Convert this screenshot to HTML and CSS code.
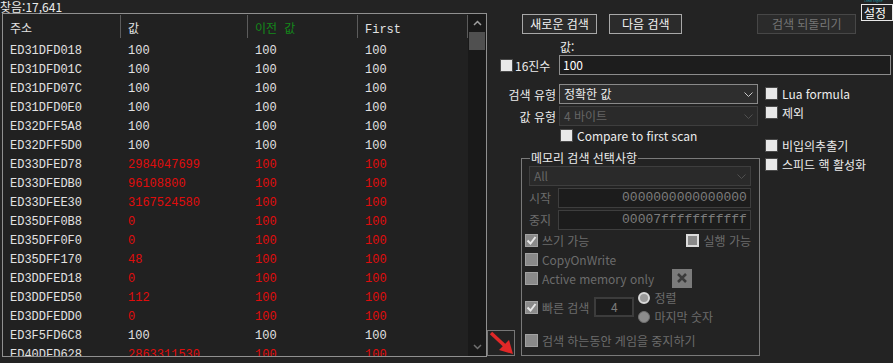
FILE: index.html
```html
<!DOCTYPE html>
<html lang="ko">
<head>
<meta charset="UTF-8">
<title>Cheat Engine</title>
<link rel="stylesheet" href="styles.css">
</head>
<body>
<div class="form">

    <!-- 결과 목록 -->
    <div class="left">
        <div class="found">찾음:17,641</div>
        <div class="results">
            <div class="grid">
                <div class="head">
                    <div class="cell c1">주소</div>
                    <div class="cell c2">값</div>
                    <div class="cell c3 prev">이전 값</div>
                    <div class="cell c4">First</div>
                </div>
                <div class="rows">
                    <div class="row"><div class="c1">ED31DFD018</div><div class="c2">100</div><div class="c3">100</div><div class="c4">100</div></div>
                    <div class="row"><div class="c1">ED31DFD01C</div><div class="c2">100</div><div class="c3">100</div><div class="c4">100</div></div>
                    <div class="row"><div class="c1">ED31DFD07C</div><div class="c2">100</div><div class="c3">100</div><div class="c4">100</div></div>
                    <div class="row"><div class="c1">ED31DFD0E0</div><div class="c2">100</div><div class="c3">100</div><div class="c4">100</div></div>
                    <div class="row"><div class="c1">ED32DFF5A8</div><div class="c2">100</div><div class="c3">100</div><div class="c4">100</div></div>
                    <div class="row"><div class="c1">ED32DFF5D0</div><div class="c2">100</div><div class="c3">100</div><div class="c4">100</div></div>
                    <div class="row changed"><div class="c1">ED33DFED78</div><div class="c2">2984047699</div><div class="c3">100</div><div class="c4">100</div></div>
                    <div class="row changed"><div class="c1">ED33DFEDB0</div><div class="c2">96108800</div><div class="c3">100</div><div class="c4">100</div></div>
                    <div class="row changed"><div class="c1">ED33DFEE30</div><div class="c2">3167524580</div><div class="c3">100</div><div class="c4">100</div></div>
                    <div class="row changed"><div class="c1">ED35DFF0B8</div><div class="c2">0</div><div class="c3">100</div><div class="c4">100</div></div>
                    <div class="row changed"><div class="c1">ED35DFF0F0</div><div class="c2">0</div><div class="c3">100</div><div class="c4">100</div></div>
                    <div class="row changed"><div class="c1">ED35DFF170</div><div class="c2">48</div><div class="c3">100</div><div class="c4">100</div></div>
                    <div class="row changed"><div class="c1">ED3DDFED18</div><div class="c2">0</div><div class="c3">100</div><div class="c4">100</div></div>
                    <div class="row changed"><div class="c1">ED3DDFED50</div><div class="c2">112</div><div class="c3">100</div><div class="c4">100</div></div>
                    <div class="row changed"><div class="c1">ED3DDFEDD0</div><div class="c2">0</div><div class="c3">100</div><div class="c4">100</div></div>
                    <div class="row"><div class="c1">ED3F5FD6C8</div><div class="c2">100</div><div class="c3">100</div><div class="c4">100</div></div>
                    <div class="row changed"><div class="c1">ED40DFD628</div><div class="c2">2863311530</div><div class="c3">100</div><div class="c4">100</div></div>
                </div>
            </div>
            <div class="scrollbar">
                <div class="sb-btn"><svg width="9" height="6" viewBox="0 0 9 6"><polyline points="1,5 4.5,1.5 8,5" fill="none" stroke="#a0a0a0" stroke-width="1.5"/></svg></div>
                <div class="sb-thumb"></div>
                <div class="sb-track"></div>
                <div class="sb-btn"><svg width="9" height="6" viewBox="0 0 9 6"><polyline points="1,1 4.5,4.5 8,1" fill="none" stroke="#707070" stroke-width="1.5"/></svg></div>
            </div>
        </div>
    </div>

    <!-- 검색 패널 -->
    <div class="panel">
        <div class="toprow">
            <div class="btn btn-new">새로운 검색</div>
            <div class="btn btn-next">다음 검색</div>
            <div class="btn btn-undo">검색 되돌리기</div>
            <div class="settings-wrap">
                <div class="logo">Cheat Engine</div>
                <div class="settings">설정</div>
            </div>
        </div>

        <div class="value-label">값:</div>
        <div class="value-row">
            <div class="hex"><span class="cb"></span>16진수</div>
            <div class="value-input">100</div>
        </div>

        <div class="scan">
            <div class="scan-main">
                <div class="field-row">
                    <div class="field-label">검색 유형</div>
                    <div class="select">정확한 값<svg width="9" height="5" viewBox="0 0 9 5"><polyline points="0.5,0.5 4.5,4.5 8.5,0.5" fill="none" stroke="#c8c8c8"/></svg></div>
                </div>
                <div class="field-row">
                    <div class="field-label">값 유형</div>
                    <div class="select disabled">4 바이트<svg width="9" height="5" viewBox="0 0 9 5"><polyline points="0.5,0.5 4.5,4.5 8.5,0.5" fill="none" stroke="#505050"/></svg></div>
                </div>
                <div class="compare"><span class="cb"></span>Compare to first scan</div>

                <div class="lower">
                    <div class="arrow-col">
                        <div class="arrow-btn">
                            <svg width="26" height="24" viewBox="0 0 26 24">
                                <line x1="3" y1="2" x2="17" y2="15" stroke="#e02828" stroke-width="3.5"/>
                                <polygon points="25,23 11,19 21,9" fill="#e02828"/>
                            </svg>
                        </div>
                    </div>
                    <fieldset class="group">
                        <legend>메모리 검색 선택사항</legend>
                        <div class="group-body">
                            <div class="select disabled all">All<svg width="9" height="5" viewBox="0 0 9 5"><polyline points="0.5,0.5 4.5,4.5 8.5,0.5" fill="none" stroke="#505050"/></svg></div>
                            <div class="range-row">
                                <div class="range-label">시작</div>
                                <div class="range-input">0000000000000000</div>
                            </div>
                            <div class="range-row">
                                <div class="range-label">중지</div>
                                <div class="range-input">00007fffffffffff</div>
                            </div>
                            <div class="opt-row first split">
                                <div class="opt"><span class="cb off"><svg width="11" height="11" viewBox="0 0 11 11"><polyline points="1.5,5.5 4.5,8.5 9.5,2" fill="none" stroke="#e6e6e6" stroke-width="2"/></svg></span>쓰기 가능</div>
                                <div class="opt"><span class="cb mixed"></span>실행 가능</div>
                            </div>
                            <div class="opt-row"><span class="cb off"></span>CopyOnWrite</div>
                            <div class="opt-row"><span class="cb off"></span>Active memory only<span class="xbtn"><svg width="20" height="19" viewBox="0 0 20 19"><path d="M6 5 L14 13 M14 5 L6 13" stroke="#3a3a3a" stroke-width="2.5"/></svg></span></div>
                            <div class="fast-row">
                                <span class="cb off"><svg width="11" height="11" viewBox="0 0 11 11"><polyline points="1.5,5.5 4.5,8.5 9.5,2" fill="none" stroke="#e6e6e6" stroke-width="2"/></svg></span>
                                <span class="fast-label">빠른 검색</span>
                                <div class="fast-input">4</div>
                                <div class="radios">
                                    <div class="radio-item"><span class="radio on"></span>정렬</div>
                                    <div class="radio-item"><span class="radio"></span>마지막 숫자</div>
                                </div>
                            </div>
                            <div class="opt-row pause"><span class="cb off"></span>검색 하는동안 게임을 중지하기</div>
                        </div>
                    </fieldset>
                </div>
            </div>

            <div class="side">
                <div class="side-item"><span class="cb"></span>Lua formula</div>
                <div class="side-item"><span class="cb"></span>제외</div>
                <div class="side-item gap"><span class="cb"></span>비입의추출기</div>
                <div class="side-item"><span class="cb"></span>스피드 핵 활성화</div>
            </div>
        </div>
    </div>
</div>
</body>
</html>
```

FILE: styles.css
```css
/* 기본 */
body {
    margin: 0;
    width: 893px;
    height: 363px;
    overflow: hidden;
    background-color: #232323;
    color: #ececec;
    font-family: "Noto Sans CJK KR", "Noto Sans", sans-serif;
    font-size: 12px;
}

.form {
    display: flex;
    height: 363px;
}

/* 결과 목록 */
.left {
    margin-left: 2px;
    width: 485px;
}

.found {
    margin-left: -2px;
    height: 13px;
    line-height: 13px;
    white-space: nowrap;
}

.results {
    display: flex;
    height: 344px;
    box-sizing: border-box;
    border: 1px solid #909090;
    background-color: #212121;
    overflow: hidden;
}

.grid {
    width: 465px;
    font-family: "Liberation Mono", "Noto Sans CJK KR", monospace;
    font-size: 12px;
    color: #e2e2e2;
}

.head {
    display: flex;
    height: 25px;
}

.head .cell {
    height: 19px;
    margin-top: 1px;
    padding-top: 4px;
    line-height: 23px;
    border-right: 1px solid #5c5c5c;
}

.head .prev {
    color: #13891a;
}

.rows {
    padding-top: 3px;
}

.row {
    display: flex;
    height: 19px;
    line-height: 19px;
    white-space: nowrap;
}

.c1, .c2, .c3, .c4 {
    box-sizing: border-box;
    padding-left: 7px;
}

.head .c1, .head .c2, .head .c3, .head .c4 {
    box-sizing: content-box;
}

.c1 { width: 118px; }
.c2 { width: 127px; }
.c3 { width: 110px; }
.c4 { width: 110px; }

.head .c1 { width: 110px; }
.head .c2 { width: 119px; }
.head .c3 { width: 102px; }
.head .c4 { width: 102px; }

.row.changed .c2,
.row.changed .c3,
.row.changed .c4 {
    color: #e00c0c;
}

.scrollbar {
    width: 18px;
    display: flex;
    flex-direction: column;
    background-color: #191919;
}

.sb-btn {
    height: 18px;
    display: flex;
    align-items: center;
    justify-content: center;
}

.sb-thumb {
    height: 18px;
    margin: 0 1px;
    background-color: #505050;
}

.sb-track {
    flex: 1;
}

/* 검색 패널 */
.panel {
    width: 406px;
    display: flex;
    flex-direction: column;
}

.toprow {
    display: flex;
    align-items: flex-start;
    height: 34px;
}

.btn {
    box-sizing: border-box;
    height: 20px;
    margin-top: 14px;
    border: 1px solid #a8a8a8;
    background-color: #2b2b2b;
    color: #f2f2f2;
    line-height: 18px;
    text-align: center;
    white-space: nowrap;
}

.btn-new { margin-left: 35px; width: 77px; }
.btn-next { margin-left: 12px; width: 75px; }

.btn-undo {
    margin-left: 75px;
    width: 101px;
    border-color: #474747;
    color: #767676;
}

.settings-wrap {
    margin-left: 5px;
}

.logo {
    height: 4px;
    margin-left: 3px;
    font-size: 3px;
    line-height: 3px;
    color: #1e95a8;
    white-space: nowrap;
    overflow: hidden;
}

.settings {
    box-sizing: border-box;
    width: 32px;
    height: 17px;
    border: 1px solid #e8e8e8;
    padding-left: 2px;
    font-size: 12px;
    line-height: 15px;
    color: #fff;
}

.value-label {
    height: 17px;
    padding-top: 4px;
    margin-left: 73px;
    line-height: 17px;
}

.value-row {
    display: flex;
    height: 20px;
}

.hex {
    width: 72px;
    box-sizing: border-box;
    padding-left: 13px;
    display: flex;
    align-items: center;
    gap: 2px;
}

.value-input {
    width: 332px;
    height: 20px;
    box-sizing: border-box;
    border: 1px solid #8c8c8c;
    background-color: #1d1d1d;
    padding-left: 3px;
    line-height: 18px;
    color: #fff;
}

.scan {
    display: flex;
    margin-top: 9px;
}

.scan-main {
    width: 273px;
    display: flex;
    flex-direction: column;
}

.field-row {
    display: flex;
    align-items: center;
    height: 20px;
}

.field-row + .field-row {
    margin-top: 2px;
}

.field-label {
    width: 72px;
    box-sizing: border-box;
    padding-right: 3px;
    text-align: right;
    white-space: nowrap;
}

.select {
    width: 199px;
    height: 20px;
    box-sizing: border-box;
    border: 1px solid #8a8a8a;
    background-color: #2e2e2e;
    padding: 0 4px;
    display: flex;
    align-items: center;
    justify-content: space-between;
    line-height: 18px;
}

.select.disabled {
    border-color: #3e3e3e;
    background-color: #2a2a2a;
    color: #656565;
}

.compare {
    margin-top: 2px;
    margin-left: 73px;
    height: 14px;
    display: flex;
    align-items: center;
    gap: 4px;
    white-space: nowrap;
}

/* 체크박스 */
.cb {
    flex: none;
    width: 13px;
    height: 13px;
    box-sizing: border-box;
    border: 1px solid #4a4a4a;
    background-color: #e8e8e8;
    display: inline-flex;
    align-items: center;
    justify-content: center;
}

.cb.off {
    border-color: #a2a2a2;
    background-color: #8a8a8a;
}

.cb.mixed {
    border: 2px solid #dcdcdc;
    background-color: #8a8a8a;
}

/* 하단 */
.lower {
    display: flex;
    height: 214px;
}

.arrow-col {
    width: 34px;
    display: flex;
    align-items: flex-end;
}

.arrow-btn {
    width: 28px;
    height: 26px;
    box-sizing: border-box;
    border: 1px solid #777;
}

.group {
    width: 240px;
    box-sizing: border-box;
    margin: 8px 0 0 0;
    padding: 0;
    min-width: 0;
    border: 1px solid #7a7a7a;
}

.group legend {
    margin-left: 8px;
    padding: 0 1px;
    line-height: 16px;
    white-space: nowrap;
}

.group-body {
    height: 186px;
    display: flex;
    flex-direction: column;
    color: #6c6c6c;
}

.all {
    margin-left: 7px;
    width: 222px;
}

.range-row {
    display: flex;
    margin-top: 2px;
    height: 20px;
}

.range-row:first-of-type {
    margin-top: 3px;
}

.range-label {
    width: 29px;
    margin-left: 7px;
    line-height: 20px;
}

.range-input {
    width: 193px;
    height: 20px;
    box-sizing: border-box;
    border: 1px solid #3e3e3e;
    background-color: #1c1c1c;
    padding-right: 3px;
    text-align: right;
    font-family: "Liberation Mono", monospace;
    font-size: 13px;
    line-height: 18px;
    color: #7c7c7c;
}

.opt-row {
    height: 19px;
    padding-left: 3px;
    display: flex;
    align-items: center;
    gap: 4px;
    white-space: nowrap;
}

.opt-row.first {
    margin-top: 1px;
}

.opt-row.split {
    justify-content: space-between;
    padding-right: 8px;
}

.opt {
    display: flex;
    align-items: center;
    gap: 4px;
}

.xbtn {
    margin-left: 14px;
    width: 20px;
    height: 19px;
    background-color: #7b7b7b;
    display: flex;
}

.fast-row {
    height: 38px;
    padding-left: 3px;
    display: flex;
    align-items: center;
    white-space: nowrap;
}

.fast-label {
    margin-left: 4px;
}

.fast-input {
    margin-left: 5px;
    width: 40px;
    height: 20px;
    box-sizing: border-box;
    border: 2px solid #3c3c3c;
    background-color: #1c1c1c;
    text-align: center;
    line-height: 16px;
    color: #7c7c7c;
}

.radios {
    margin-left: 4px;
    display: flex;
    flex-direction: column;
}

.radio-item {
    height: 19px;
    display: flex;
    align-items: center;
    gap: 4px;
}

.radio {
    width: 12px;
    height: 12px;
    box-sizing: border-box;
    border-radius: 50%;
    border: 1px solid #6e6e6e;
    background-color: #8c8c8c;
}

.radio.on {
    border: 2px solid #d8d8d8;
    background-color: #9a9a9a;
}

.opt-row.pause {
    margin-top: 5px;
}

.side {
    margin-left: 5px;
    display: flex;
    flex-direction: column;
}

.side-item {
    height: 19px;
    display: flex;
    align-items: center;
    gap: 4px;
    white-space: nowrap;
}

.side-item.gap {
    margin-top: 14px;
}
```
